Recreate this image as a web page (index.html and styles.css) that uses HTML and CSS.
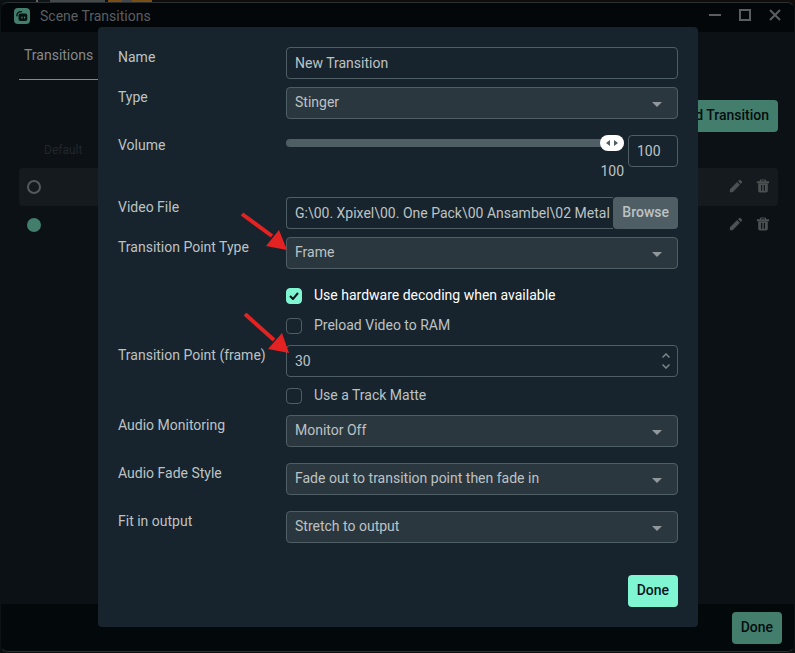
FILE: index.html
```html
<!DOCTYPE html>
<html lang="en">
<head>
    <meta charset="UTF-8">
    <meta name="viewport" content="width=device-width, initial-scale=1.0">
    <title>Scene Transitions</title>
    <link rel="stylesheet" href="styles.css">
</head>
<body>
    <!-- icons shared by the table rows -->
    <svg class="sprite" aria-hidden="true">
        <symbol id="pencil" viewBox="0 0 16 16">
            <path d="M1 15v-3.200L9.300 3.500l3.200 3.200L4.200 15zM10.300 2.500l1.100-1.100a1.400 1.400 0 0 1 2 0l1.200 1.200a1.400 1.400 0 0 1 0 2l-1.100 1.100z"/>
        </symbol>
        <symbol id="trash" viewBox="0 0 16 16">
            <path fill-rule="evenodd" d="M5 .5h6l1 2h3v2.300H1V2.500h3zM6 1.700l-.4.800h4.800l-.4-.8zM2.500 5.200h11v8.300a2 2 0 0 1-2 2h-7a2 2 0 0 1-2-2zM5.700 6.800v6.500h1.400V6.800zM8.900 6.800v6.500h1.400V6.800z"/>
        </symbol>
    </svg>

    <div class="window">
        <header class="titlebar">
            <svg class="logo" viewBox="0 0 16 16" aria-hidden="true">
                <rect width="16" height="16" rx="4" fill="#437e6c"/>
                <path d="M2.800 7.800C3 5 5 3.600 7.500 3.700" fill="none" stroke="#06120f" stroke-width="1.300" stroke-linecap="round"/>
                <rect x="4.500" y="5.500" width="8.800" height="7.500" rx="2" fill="#06120f"/>
                <rect x="7.400" y="8.500" width="1.200" height="2" rx=".5" fill="#437e6c"/>
                <rect x="10" y="8.500" width="1.200" height="2" rx=".5" fill="#437e6c"/>
            </svg>
            <span class="title">Scene Transitions</span>
            <div class="window-buttons">
                <button type="button" aria-label="Minimize"><svg viewBox="0 0 12 12"><path d="M0 6h12"/></svg></button>
                <button type="button" aria-label="Maximize"><svg viewBox="0 0 12 12"><path d="M1 1h10v10H1z"/></svg></button>
                <button type="button" aria-label="Close"><svg viewBox="0 0 12 12"><path d="M1 1l10 10M11 1L1 11"/></svg></button>
            </div>
        </header>

        <main class="content">
            <nav class="tabs"><a href="#" class="tab">Transitions</a></nav>
            <div class="toolbar"><button type="button" class="btn btn-dim">Add Transition</button></div>
            <table class="transitions">
                <thead>
                    <tr><th>Default</th><th></th></tr>
                </thead>
                <tbody>
                    <tr class="selected">
                        <td><input type="radio" name="default" aria-label="Default"></td>
                        <td>
                            <div class="actions">
                                <button type="button" aria-label="Edit"><svg><use href="#pencil"/></svg></button>
                                <button type="button" aria-label="Delete"><svg><use href="#trash"/></svg></button>
                            </div>
                        </td>
                    </tr>
                    <tr>
                        <td><input type="radio" name="default" aria-label="Default" checked></td>
                        <td>
                            <div class="actions">
                                <button type="button" aria-label="Edit"><svg><use href="#pencil"/></svg></button>
                                <button type="button" aria-label="Delete"><svg><use href="#trash"/></svg></button>
                            </div>
                        </td>
                    </tr>
                </tbody>
            </table>
        </main>

        <footer class="footer"><button type="button" class="btn btn-dim">Done</button></footer>
    </div>

    <div class="overlay">
        <form class="modal">
            <div class="row">
                <label for="name">Name</label>
                <input type="text" id="name" class="field" value="New Transition">
            </div>
            <div class="row wide">
                <label for="type">Type</label>
                <select id="type" class="field"><option>Stinger</option></select>
            </div>
            <div class="row wide">
                <label for="volume">Volume</label>
                <div class="volume">
                    <div class="slider">
                        <input type="range" id="volume" min="0" max="100" value="100">
                        <output for="volume" id="volumeValue">100</output>
                    </div>
                    <input type="text" id="volumeNumber" class="field" value="100" aria-label="Volume value">
                </div>
            </div>
            <div class="row">
                <label for="file">Video File</label>
                <div class="file">
                    <input type="text" id="file" class="field" value="G:\00. Xpixel\00. One Pack\00 Ansambel\02 Metal">
                    <button type="button" class="btn btn-browse">Browse</button>
                </div>
            </div>
            <div class="row wide">
                <label for="pointType">Transition Point Type</label>
                <select id="pointType" class="field"><option>Frame</option></select>
                <svg class="arrow" viewBox="0 0 48 40" aria-hidden="true">
                    <path d="M2 4l30 22" stroke="#e42222" stroke-width="4"/>
                    <path d="M39 20l8 20-21-4z" fill="#e42222"/>
                </svg>
            </div>
            <div class="row check">
                <input type="checkbox" id="hardware" checked>
                <label for="hardware">Use hardware decoding when available</label>
            </div>
            <div class="row check">
                <input type="checkbox" id="preload">
                <label for="preload">Preload Video to RAM</label>
            </div>
            <div class="row">
                <label for="point">Transition Point (frame)</label>
                <input type="number" id="point" class="field" value="30">
                <svg class="arrow arrow-low" viewBox="0 0 48 40" aria-hidden="true">
                    <path d="M3 1l29 26" stroke="#e42222" stroke-width="4"/>
                    <path d="M40 20l7 20-21-4z" fill="#e42222"/>
                </svg>
            </div>
            <div class="row check">
                <input type="checkbox" id="matte">
                <label for="matte">Use a Track Matte</label>
            </div>
            <div class="row wide">
                <label for="monitoring">Audio Monitoring</label>
                <select id="monitoring" class="field"><option>Monitor Off</option></select>
            </div>
            <div class="row wide">
                <label for="fade">Audio Fade Style</label>
                <select id="fade" class="field"><option>Fade out to transition point then fade in</option></select>
            </div>
            <div class="row wide">
                <label for="fit">Fit in output</label>
                <select id="fit" class="field"><option>Stretch to output</option></select>
            </div>
            <div class="modal-footer"><button type="button" class="btn">Done</button></div>
        </form>
    </div>

    <script>
        const range = document.getElementById('volume');
        const number = document.getElementById('volumeNumber');

        range.addEventListener('input', function() {
            number.value = this.value;
            document.getElementById('volumeValue').textContent = this.value;
        });

        number.addEventListener('change', function() {
            range.value = this.value;
            document.getElementById('volumeValue').textContent = range.value;
        });
    </script>
</body>
</html>
```
FILE: styles.css
```css
* {
    box-sizing: border-box;
}
body {
    margin: 0;
    min-height: 100vh;
    display: flex;
    /* sliver of the desktop behind the window */
    background: #0b0f10 linear-gradient(90deg, #0b1113 36px, #62666a 36px, #62666a 38px, #111517 38px, #111517 50px, #45484b 50px, #45484b 105px, #0b0f10 105px, #0b0f10 108px, #7a4f16 108px, #7a4f16 122px, #45484b 122px, #45484b 132px, #7a4f16 132px, #7a4f16 152px, #100d0a 152px) top / 100% 3px no-repeat;
    font-family: Roboto, "Liberation Sans", sans-serif;
    font-size: 14px;
    line-height: 20px;
    color: #bdc2c4;
}
button, input, select {
    font: inherit;
    color: inherit;
    margin: 0;
}
button {
    cursor: pointer;
}
.sprite {
    position: absolute;
    width: 0;
    height: 0;
}

/* main window */
.window {
    flex: 1;
    display: flex;
    flex-direction: column;
    margin: 2px 0 1px;
    border: 1px solid #0d1215;
    border-top-color: #2a2f32;
    border-bottom-color: #2a3033;
    border-radius: 8px;
    background: #0c1115;
    overflow: hidden;
}
.titlebar {
    display: flex;
    align-items: center;
    height: 29px;
    padding: 0 13px 3px;
    background: #030709;
    color: #5b5e60;
}
.logo {
    width: 16px;
    height: 16px;
    margin-right: 10px;
}
.window-buttons {
    display: flex;
    gap: 18px;
    margin-left: auto;
    padding-bottom: 2px;
}
.window-buttons button {
    display: flex;
    padding: 0;
    border: none;
    background: none;
}
.window-buttons svg {
    width: 12px;
    height: 12px;
    fill: none;
    stroke: #5b5e60;
    stroke-width: 2;
}
.content {
    flex: 1;
    padding: 0 16px 0 18px;
}
.tabs {
    display: flex;
}
.tab {
    padding: 13px 5px 14px;
    border-bottom: 1px solid #85898b;
    color: #85898b;
    text-decoration: none;
}
.toolbar {
    display: flex;
    justify-content: flex-end;
    margin-top: 20px;
}
.transitions {
    width: 100%;
    border-collapse: collapse;
}
.transitions th {
    height: 36px;
    padding: 0 25px;
    font-size: 12px;
    font-weight: 400;
    text-align: left;
    color: #20272b;
}
.transitions td {
    height: 38px;
    padding: 0 8px;
}
.transitions .selected td {
    background: #141a1d;
}
.selected td:first-child {
    border-radius: 4px 0 0 4px;
}
.selected td:last-child {
    border-radius: 0 4px 4px 0;
}
.transitions input {
    appearance: none;
    display: block;
    width: 14px;
    height: 14px;
    border: 2px solid #54595b;
    border-radius: 50%;
}
.transitions input:checked {
    border-color: #437e6c;
    background: #437e6c;
}
.actions {
    display: flex;
    justify-content: flex-end;
    gap: 13px;
    padding-bottom: 2px;
}
.actions button {
    padding: 0;
    border: none;
    background: none;
}
.actions svg {
    display: block;
    width: 14px;
    height: 14px;
    fill: #4b5052;
}
.footer {
    display: flex;
    justify-content: flex-end;
    padding: 8px 12px 7px;
    background: #03090b;
}

/* buttons */
.btn {
    height: 32px;
    padding: 0 9px 2px;
    border: none;
    border-radius: 4px;
    background: #80f5d2;
    color: #09161d;
    font-weight: 500;
}
.btn-dim {
    background: #437e6c;
    color: #060c0f;
}
.btn-browse {
    background: #4f5e65;
    color: #bdc2c4;
}

/* modal */
.overlay {
    position: fixed;
    inset: 0;
    display: flex;
    align-items: center;
    justify-content: center;
    padding: 1px 0 0 1px;
}
.modal {
    width: 100%;
    max-width: 600px;
    padding: 20px;
    border-radius: 4px;
    background: #17242d;
}
.row {
    position: relative;
    display: grid;
    grid-template-columns: 168px 1fr;
    align-items: start;
    margin-bottom: 8px;
}
.row.wide {
    margin-bottom: 16px;
}
.field {
    width: 100%;
    min-width: 0;
    height: 32px;
    padding: 0 8px;
    border: 1px solid #4f5e65;
    border-radius: 4px;
    background: #17242d;
    outline: none;
}
select.field {
    appearance: none;
    padding-bottom: 2px;
    background: #2b373e url("data:image/svg+xml,%3Csvg xmlns='http://www.w3.org/2000/svg' width='10' height='5'%3E%3Cpath d='M0 0h10L5 5z' fill='%2391989b'/%3E%3C/svg%3E") no-repeat right 15px top 14px;
}
input[type="number"] {
    appearance: textfield;
    background: #17242d url("data:image/svg+xml,%3Csvg xmlns='http://www.w3.org/2000/svg' width='8' height='16' fill='none' stroke='%237c868b' stroke-width='1.500'%3E%3Cpath d='M.5 4.500L4 1l3.500 3.500M.5 11.500L4 15l3.500-3.500'/%3E%3C/svg%3E") no-repeat right 7px center;
}
input[type="number"]::-webkit-inner-spin-button {
    appearance: none;
}
.volume {
    display: grid;
    grid-template-columns: 1fr 50px;
    gap: 4px;
}
.slider {
    display: flex;
    flex-direction: column;
}
.slider input {
    appearance: none;
    width: 100%;
    height: 16px;
    background: none;
}
.slider input::-webkit-slider-runnable-track {
    height: 8px;
    border-radius: 4px;
    background: #4f5e65;
}
.slider input::-webkit-slider-thumb {
    appearance: none;
    width: 24px;
    height: 16px;
    margin-top: -4px;
    border-radius: 8px;
    background: #fff url("data:image/svg+xml,%3Csvg xmlns='http://www.w3.org/2000/svg' width='14' height='6'%3E%3Cpath d='M5 0v6L1 3zM9 0v6l4-3z' fill='%234f5e65'/%3E%3C/svg%3E") center no-repeat;
}
.slider output {
    margin-top: 10px;
    text-align: right;
}
.file {
    display: flex;
}
.file .field {
    flex: 1;
    padding-right: 3px;
    border-right: none;
    border-radius: 4px 0 0 4px;
}
.check {
    grid-template-columns: 16px 1fr;
    column-gap: 12px;
    align-items: center;
    height: 22px;
    padding-left: 168px;
}
.check input {
    appearance: none;
    width: 16px;
    height: 16px;
    border: 1px solid #4f5e65;
    border-radius: 4px;
}
.check input:checked {
    border-color: #80f5d2;
    background: #80f5d2 url("data:image/svg+xml,%3Csvg xmlns='http://www.w3.org/2000/svg' width='10' height='8' fill='none' stroke='%2309161d' stroke-width='2'%3E%3Cpath d='M1 4l3 3 5-6'/%3E%3C/svg%3E") center no-repeat;
}
.check label {
    padding-bottom: 2px;
}
.check input:checked + label {
    color: #fff;
}
.modal-footer {
    display: flex;
    justify-content: flex-end;
    margin-top: 32px;
}

/* callout arrows over the form */
.arrow {
    position: absolute;
    left: 122px;
    top: -27px;
    width: 48px;
    height: 40px;
}
.arrow-low {
    left: 124px;
    top: -32px;
}
```
